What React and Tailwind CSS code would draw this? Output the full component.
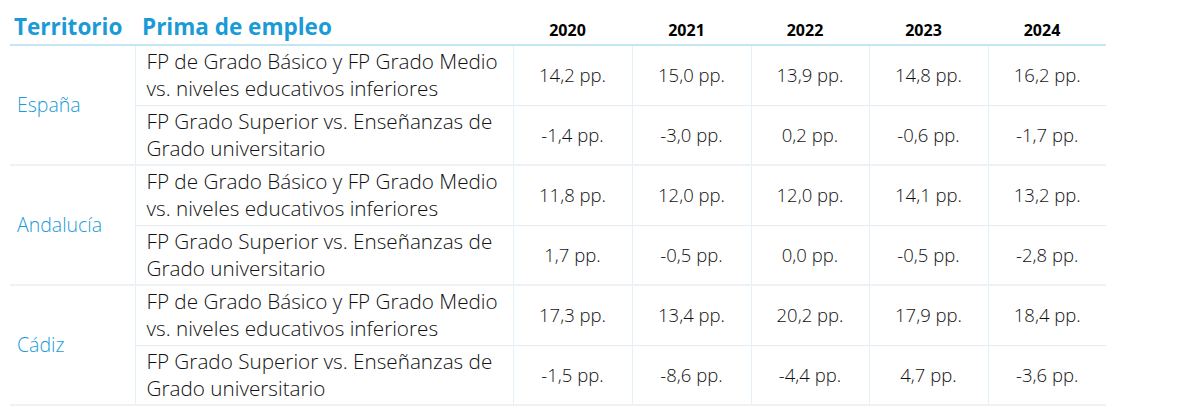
import React from 'react';

const years = ['2020', '2021', '2022', '2023', '2024'];

const LABEL_A = 'FP de Grado Básico y FP Grado Medio vs. niveles educativos inferiores';
const LABEL_B = 'FP Grado Superior vs. Enseñanzas de Grado universitario';

const data = [
  {
    territory: 'España',
    rows: [
      { label: LABEL_A, values: ['14,2', '15,0', '13,9', '14,8', '16,2'] },
      { label: LABEL_B, values: ['-1,4', '-3,0', '0,2', '-0,6', '-1,7'] },
    ],
  },
  {
    territory: 'Andalucía',
    rows: [
      { label: LABEL_A, values: ['11,8', '12,0', '12,0', '14,1', '13,2'] },
      { label: LABEL_B, values: ['1,7', '-0,5', '0,0', '-0,5', '-2,8'] },
    ],
  },
  {
    territory: 'Cádiz',
    rows: [
      { label: LABEL_A, values: ['17,3', '13,4', '20,2', '17,9', '18,4'] },
      { label: LABEL_B, values: ['-1,5', '-8,6', '-4,4', '4,7', '-3,6'] },
    ],
  },
];

const App = () => {
  return (
    <div className="w-[1180px] h-[417px] bg-white pl-[10px] text-[#111111] font-light" style={{ fontFamily: '"Open Sans", sans-serif' }}>
      <table className="w-[1096px] table-fixed border-collapse">
        <colgroup>
          <col className="w-[125px]" />
          <col className="w-[378px]" />
          <col className="w-[119px]" />
          <col className="w-[119px]" />
          <col className="w-[118px]" />
          <col className="w-[119px]" />
          <col className="w-[118px]" />
        </colgroup>
        <thead>
          <tr className="h-[45px] border-b-2 border-[#c4e5f4]">
            <th className="text-left align-bottom pb-[6px] pl-[4px] text-[22.5px] font-bold text-[#1a9bd7] leading-none">Territorio</th>
            <th className="text-left align-bottom pb-[6px] pl-[7px] text-[22.5px] font-bold text-[#1a9bd7] leading-none">Prima de empleo</th>
            {years.map((y) => (
              <th key={y} className="align-bottom pb-[6px] pr-[10px] text-[16px] font-bold text-black leading-none">{y}</th>
            ))}
          </tr>
        </thead>
        <tbody>
          {data.map((group) =>
            group.rows.map((row, i) => (
              <tr
                key={group.territory + i}
                className={i === 0 ? 'h-[60px] border-b border-[#e6ecef]' : 'h-[60px] border-b-2 border-[#eff1f2]'}
              >
                {i === 0 && (
                  <td rowSpan={2} className="pl-[7px] align-middle text-[19.5px] text-[#1a9bd7]">
                    {group.territory}
                  </td>
                )}
                <td className="border-l border-[#e3f1f8] pl-[11px] pr-[4px] text-[20.7px] leading-[27px]">
                  {row.label}
                </td>
                {row.values.map((v, j) => (
                  <td key={j} className="border-l border-[#e3f1f8] text-center text-[18.5px]">
                    {v} pp.
                  </td>
                ))}
              </tr>
            ))
          )}
        </tbody>
      </table>
    </div>
  );
};

export default App;
